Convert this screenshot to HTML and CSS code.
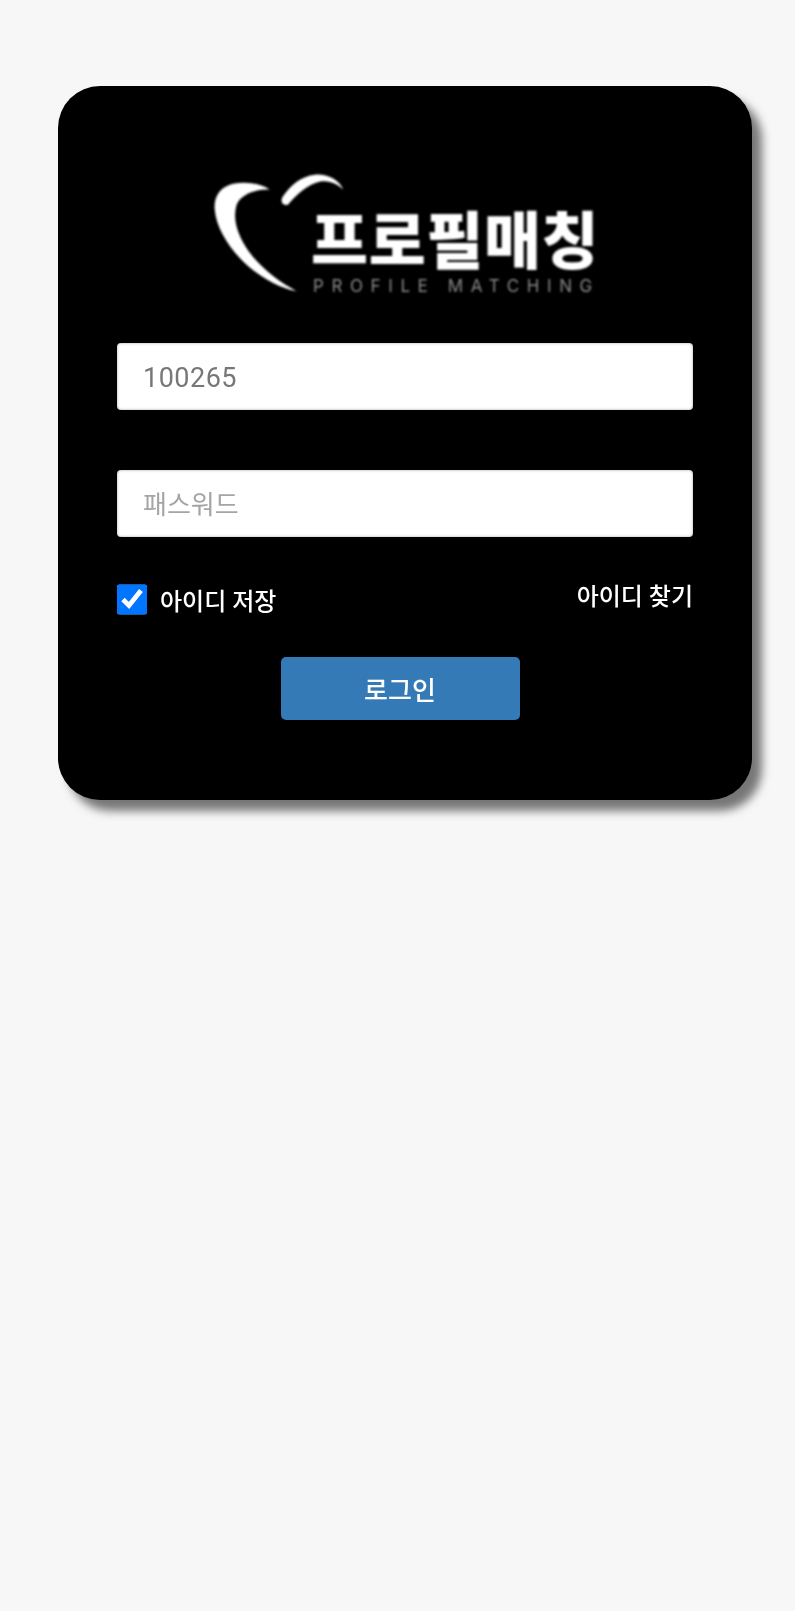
FILE: index.html
```html
<!DOCTYPE html>
<html lang="ko">
<head>
<meta charset="utf-8">
<title>프로필매칭</title>
<link rel="stylesheet" href="styles.css">
</head>
<body>
<main class="card">
  <div class="logo">
    <svg class="heart" viewBox="70 35 395 365" aria-hidden="true">
      <path fill="#fff" d="M240 88C215 70 170 62 130 70C95 78 72 105 75 145C78 195 110 250 150 292C195 340 260 380 320 392C270 365 215 325 175 270C145 225 128 180 140 135C150 105 195 85 240 88Z"/>
      <path fill="#fff" d="M460 88C445 55 410 40 375 43C335 47 300 75 278 110C270 125 280 138 295 132C320 105 350 72 395 63C420 60 445 72 460 88Z"/>
    </svg>
    <div class="wordmark">
      <div class="wordmark-ko">프로필매칭</div>
      <div class="wordmark-en">PROFILE MATCHING</div>
    </div>
  </div>
  <form class="form">
    <input class="field field-id" type="text" value="100265" aria-label="아이디">
    <input class="field field-pw" type="password" placeholder="패스워드">
    <div class="options">
      <label class="remember">
        <input class="check" type="checkbox" checked>
        <span>아이디 저장</span>
      </label>
      <a class="find" href="#">아이디 찾기</a>
    </div>
    <button class="submit" type="button">로그인</button>
  </form>
</main>
</body>
</html>
```

FILE: styles.css
```css
* { box-sizing: border-box; }
html, body { margin: 0; padding: 0; }
body {
  height: 1611px;
  background: #f7f7f7;
  font-family: Roboto, "Noto Sans CJK KR", sans-serif;
  overflow: hidden;
}
.card {
  width: 694px;
  height: 714px;
  margin: 86px 0 0 58px;
  padding: 86px 59px 0;
  background: #000;
  border-radius: 42px;
  box-shadow: 10px 11px 10px rgba(0, 0, 0, 0.52);
}
.logo {
  display: flex;
  align-items: flex-end;
  height: 122px;
  margin-left: 96px;
  filter: blur(0.8px);
}
.heart {
  flex: none;
  width: 132px;
  height: 122px;
  margin-right: -34px;
}
.wordmark {
  display: flex;
  flex-direction: column;
  margin-bottom: -3px;
  color: #fff;
}
.wordmark-ko {
  height: 68px;
  font-family: "Noto Sans CJK KR", sans-serif;
  font-size: 62px;
  font-weight: 900;
  line-height: 60px;
  letter-spacing: 0.6px;
  white-space: nowrap;
}
.wordmark-en {
  height: 22px;
  font-family: Inter, sans-serif;
  font-size: 17px;
  line-height: 22px;
  letter-spacing: 7.6px;
  color: #8a8a8a;
  white-space: nowrap;
  padding-left: 2px;
}
.form {
  display: flex;
  flex-direction: column;
  margin-top: 49px;
}
.field {
  display: block;
  width: 100%;
  height: 67px;
  padding: 2px 26px 0;
  border: 0;
  border-radius: 4px;
  background: #fff;
  box-shadow: inset 0 0 3px rgba(0, 0, 0, 0.35);
  font-family: inherit;
  font-size: 27px;
  letter-spacing: 0.5px;
  color: #777;
  outline: none;
  filter: blur(0.7px);
}
.field-pw { margin-top: 60px; }
.field::placeholder { color: #a5a5a5; opacity: 1; font-size: 26px; letter-spacing: 0; }
.options {
  display: flex;
  justify-content: space-between;
  align-items: flex-start;
  margin-top: 47px;
  color: #fff;
  font-size: 24px;
  font-weight: 500;
}
.remember {
  display: flex;
  align-items: center;
  gap: 13px;
  height: 31px;
  filter: blur(0.6px);
}
.check {
  width: 30px;
  height: 31px;
  margin: 0;
  accent-color: #0075ff;
}
.find {
  color: #fff;
  text-decoration: none;
  line-height: 26px;
  filter: blur(0.6px);
}
.submit {
  align-self: center;
  width: 239px;
  height: 63px;
  margin: 42px 10px 0 0;
  border: 0;
  border-radius: 5px;
  background: #337ab7;
  color: #fff;
  font-family: inherit;
  font-size: 26px;
  font-weight: 500;
  filter: blur(0.6px);
}
```
